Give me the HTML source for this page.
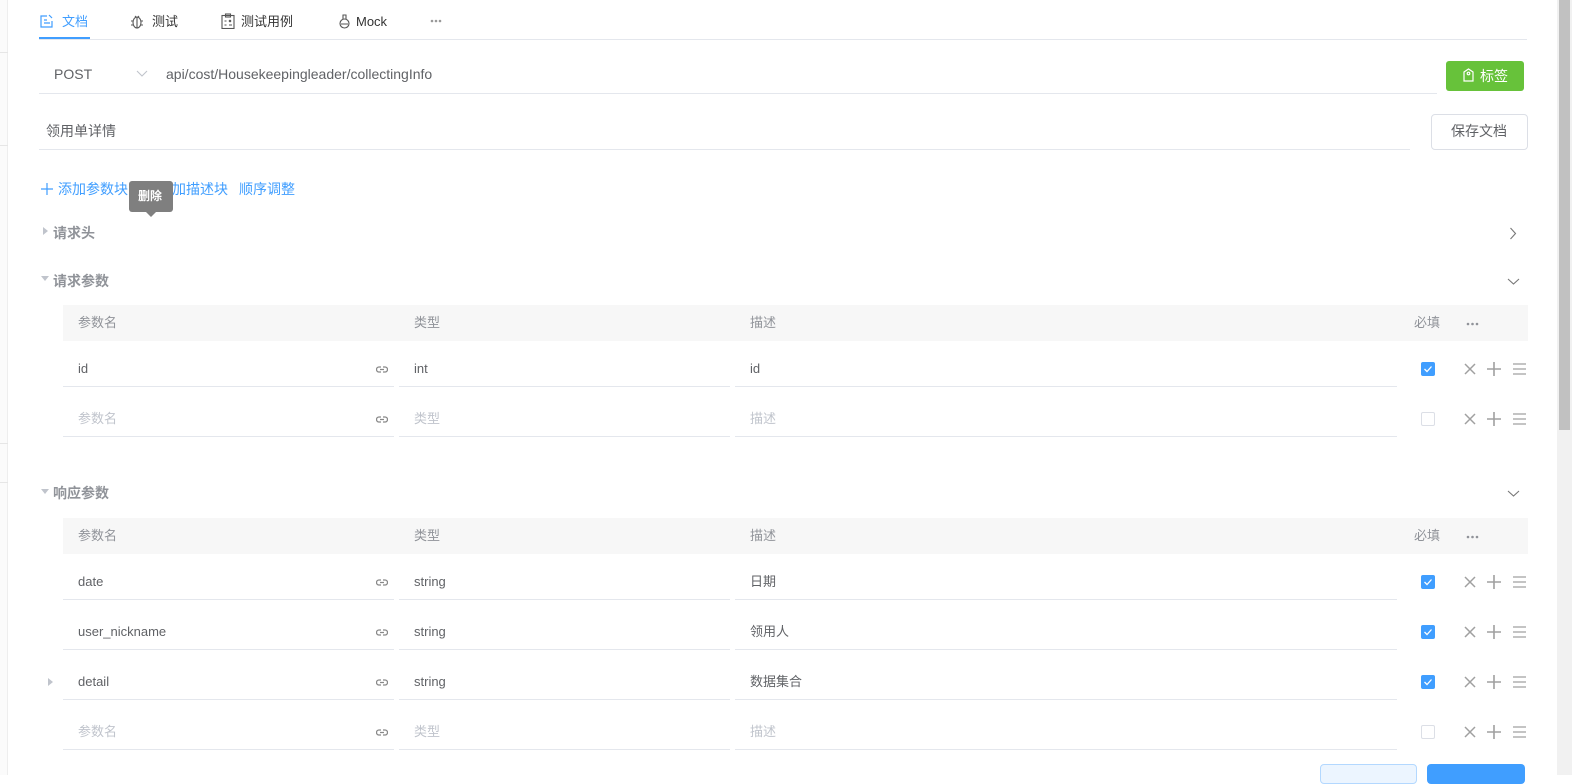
<!DOCTYPE html>
<html><head><meta charset="utf-8"><style>
*{box-sizing:border-box;margin:0;padding:0}
body{width:1572px;height:775px;overflow:hidden;background:#fff;position:relative;font-family:"Liberation Sans","Noto Sans CJK SC",sans-serif;font-size:13px;color:#606266}
.a{position:absolute}
.t{position:absolute;white-space:nowrap;line-height:16px}
.hl{position:absolute;height:1px;background:#e4e7ed}
.cb{position:absolute;width:14px;height:14px;border-radius:2px}
.on{background:#409eff}
.off{border:1px solid #dcdfe6;background:#fff}
</style></head><body>
<div class="a" style="left:0;top:0;width:8px;height:775px;background:#fbfbfb;border-right:1px solid #eee"></div>
<div class="a" style="left:0;top:52px;width:8px;height:1px;background:#e6e6e6"></div>
<div class="a" style="left:0;top:145px;width:8px;height:1px;background:#e6e6e6"></div>
<div class="a" style="left:0;top:443px;width:8px;height:1px;background:#e6e6e6"></div>
<div class="a" style="left:0;top:482px;width:8px;height:1px;background:#e6e6e6"></div>
<div class="a" style="left:1557px;top:0;width:15px;height:775px;background:#f1f1f1"></div>
<div class="a" style="left:1559px;top:0;width:11px;height:430px;background:#c1c1c1"></div>

<svg class="a" style="left:40px;top:14px" width="14" height="14" viewBox="0 0 14 14" fill="none" stroke="#409eff" stroke-width="1.2"><path d="M12 7v6H1V2h6"/><path d="M4 6h3M4 9h6"/><path d="M9 1l3 3"/></svg>
<div class="t" style="left:62px;top:14px;color:#409eff">文档</div>
<div class="a" style="left:39px;top:37px;width:51px;height:2px;background:#409eff"></div>
<svg class="a" style="left:130px;top:14px" width="14" height="15" viewBox="0 0 14 15" fill="none" stroke="#555" stroke-width="1.1"><ellipse cx="7" cy="8.5" rx="4" ry="5.5"/><path d="M7 3v11M3 7H1M11 7h2M3 11H1M11 11h2M5 2l1 1M9 2L8 3"/></svg>
<div class="t" style="left:152px;top:14px;color:#333">测试</div>
<svg class="a" style="left:221px;top:13px" width="14" height="16" viewBox="0 0 14 16" fill="none" stroke="#555" stroke-width="1.1"><rect x="1" y="2.5" width="12" height="13"/><rect x="4.5" y="1" width="5" height="3"/><path d="M3.5 8h2M8 7l2 2M10 7l-2 2M3.5 12h2M8 12h3"/></svg>
<div class="t" style="left:241px;top:14px;color:#333">测试用例</div>
<svg class="a" style="left:338px;top:13px" width="13" height="16" viewBox="0 0 13 16" fill="none" stroke="#555" stroke-width="1.1"><circle cx="6.5" cy="10.5" r="4.5"/><path d="M4.5 2h4M5 2v4M8 2v4M3 11h7"/></svg>
<div class="t" style="left:356px;top:14px;color:#333">Mock</div>
<svg class="a" style="left:430px;top:19px" width="12" height="4"><circle cx="2" cy="2" r="1.3" fill="#999"/><circle cx="6" cy="2" r="1.3" fill="#999"/><circle cx="10" cy="2" r="1.3" fill="#999"/></svg>
<div class="hl" style="left:39px;top:39px;width:1488px"></div>

<div class="t" style="left:54px;top:66px;color:#606266;font-size:14px">POST</div>
<svg class="a" style="left:136px;top:70px" width="12" height="8" viewBox="0 0 12 8" fill="none" stroke="#c0c4cc" stroke-width="1.1"><path d="M1 1l5 5 5-5"/></svg>
<div class="t" style="left:166px;top:66px;color:#606266;font-size:14px">api/cost/Housekeepingleader/collectingInfo</div>
<div class="hl" style="left:39px;top:93px;width:1398px"></div>
<div class="a" style="left:1446px;top:61px;width:78px;height:30px;background:#67c23a;border-radius:3px"></div>
<svg class="a" style="left:1463px;top:68px" width="11" height="14" viewBox="0 0 11 14" fill="none" stroke="#fff" stroke-width="1.2"><path d="M1 4l4.5-3L10 4v9H1z"/><circle cx="5.5" cy="5.5" r="1.3"/></svg>
<div class="t" style="left:1480px;top:68px;color:#fff;font-size:14px">标签</div>

<div class="t" style="left:46px;top:123px;color:#606266;font-size:14px">领用单详情</div>
<div class="hl" style="left:39px;top:149px;width:1371px"></div>
<div class="a" style="left:1431px;top:114px;width:97px;height:36px;border:1px solid #dcdfe6;border-radius:4px"></div>
<div class="t" style="left:1451px;top:123px;color:#606266;font-size:14px">保存文档</div>

<svg class="a" style="left:41px;top:183px" width="12" height="12" stroke="#409eff" stroke-width="1.2"><path d="M6 0v12M0 6h12"/></svg>
<div class="t" style="left:58px;top:181px;color:#409eff;font-size:14px">添加参数块</div>
<svg class="a" style="left:143px;top:183px" width="12" height="12" stroke="#409eff" stroke-width="1.2"><path d="M6 0v12M0 6h12"/></svg>
<div class="t" style="left:158px;top:181px;color:#409eff;font-size:14px">添加描述块</div>
<div class="t" style="left:239px;top:181px;color:#409eff;font-size:14px">顺序调整</div>
<div class="a" style="left:129px;top:181px;width:44px;height:31px;background:#7f7f7f;border-radius:3px"></div>
<div class="a" style="left:145px;top:211px;width:0;height:0;border-left:6px solid transparent;border-right:6px solid transparent;border-top:6px solid #7f7f7f"></div>
<div class="t" style="left:138px;top:188px;color:#fff;font-size:12px;font-weight:bold">删除</div>

<div class="a" style="left:43px;top:227px;border-top:4px solid transparent;border-bottom:4px solid transparent;border-left:5px solid #c0c4cc"></div>
<div class="t" style="left:53px;top:225px;color:#909399;font-size:14px;font-weight:bold">请求头</div>
<svg class="a" style="left:1509px;top:227px" width="8" height="13" viewBox="0 0 8 13" fill="none" stroke="#777" stroke-width="1.1"><path d="M1.5 1l5 5.5-5 5.5"/></svg>

<div class="a" style="left:41px;top:276px;border-left:4px solid transparent;border-right:4px solid transparent;border-top:5px solid #c0c4cc"></div>
<div class="t" style="left:53px;top:273px;color:#909399;font-size:14px;font-weight:bold">请求参数</div>
<svg class="a" style="left:1507px;top:278px" width="13" height="8" viewBox="0 0 13 8" fill="none" stroke="#777" stroke-width="1.1"><path d="M1 1l5.5 5 5.5-5"/></svg>

<div id="tables"></div>
<script>
function table(hy, rows){
 let h='';
 h+=`<div class="a" style="left:63px;top:${hy}px;width:1465px;height:36px;background:#f7f7f7"></div>`;
 const ty=hy+10;
 h+=`<div class="t" style="left:78px;top:${ty}px;color:#909399">参数名</div><div class="t" style="left:414px;top:${ty}px;color:#909399">类型</div><div class="t" style="left:750px;top:${ty}px;color:#909399">描述</div><div class="t" style="left:1414px;top:${ty}px;color:#909399">必填</div>`;
 h+=`<svg class="a" style="left:1466px;top:${hy+17}px" width="13" height="4"><circle cx="2" cy="2" r="1.3" fill="#909399"/><circle cx="6.5" cy="2" r="1.3" fill="#909399"/><circle cx="11" cy="2" r="1.3" fill="#909399"/></svg>`;
 rows.forEach((r,i)=>{
  const cy=hy+64+i*50;
  const py=cy-8, ly=cy+17;
  const ph=!r[0];
  const c=ph?'#c0c4cc':'#606266';
  h+=`<div class="t" style="left:78px;top:${py}px;color:${c}">${r[0]||'参数名'}</div>`;
  h+=`<div class="t" style="left:414px;top:${py}px;color:${c}">${r[1]||'类型'}</div>`;
  h+=`<div class="t" style="left:750px;top:${py}px;color:${c}">${r[2]||'描述'}</div>`;
  h+=`<svg class="a" style="left:376px;top:${cy-3}px" width="12" height="7" viewBox="0 0 12 7" fill="none" stroke="#888" stroke-width="1.3"><path d="M5 1H3a2.5 2.5 0 0 0 0 5h2M7 1h2a2.5 2.5 0 0 1 0 5H7M4 3.5h4"/></svg>`;
  h+=`<div class="hl" style="left:63px;top:${ly}px;width:331px"></div><div class="hl" style="left:399px;top:${ly}px;width:331px"></div><div class="hl" style="left:735px;top:${ly}px;width:662px"></div>`;
  if(r[3]) h+=`<div class="cb on" style="left:1421px;top:${cy-7}px"><svg width="14" height="14" viewBox="0 0 14 14" fill="none" stroke="#fff" stroke-width="1.3"><path d="M3.5 7l2.5 2.5 4.5-5"/></svg></div>`;
  else h+=`<div class="cb off" style="left:1421px;top:${cy-7}px"></div>`;
  h+=`<svg class="a" style="left:1464px;top:${cy-6}px" width="12" height="12" viewBox="0 0 12 12" stroke="#a0a0a0" stroke-width="1.5"><path d="M1 1l10 10M11 1L1 11"/></svg>`;
  h+=`<svg class="a" style="left:1487px;top:${cy-7}px" width="14" height="14" viewBox="0 0 14 14" stroke="#a0a0a0" stroke-width="1.6"><path d="M7 0v14M0 7h14"/></svg>`;
  h+=`<svg class="a" style="left:1513px;top:${cy-6}px" width="13" height="12" viewBox="0 0 13 12" stroke="#a0a0a0" stroke-width="1.3"><path d="M0 1h13M0 6h13M0 11h13"/></svg>`;
  if(r[4]) h+=`<div class="a" style="left:48px;top:${cy-4}px;border-top:4px solid transparent;border-bottom:4px solid transparent;border-left:5px solid #c0c4cc"></div>`;
 });
 return h;
}
document.getElementById('tables').outerHTML = table(305,[['id','int','id',1],['','','',0]]) + table(518,[['date','string','日期',1],['user_nickname','string','领用人',1],['detail','string','数据集合',1,1],['','','',0]]);
</script>

<div class="a" style="left:41px;top:489px;border-left:4px solid transparent;border-right:4px solid transparent;border-top:5px solid #c0c4cc"></div>
<div class="t" style="left:53px;top:485px;color:#909399;font-size:14px;font-weight:bold">响应参数</div>
<svg class="a" style="left:1507px;top:490px" width="13" height="8" viewBox="0 0 13 8" fill="none" stroke="#777" stroke-width="1.1"><path d="M1 1l5.5 5 5.5-5"/></svg>

<div class="a" style="left:1320px;top:764px;width:97px;height:20px;background:#ecf5ff;border:1px solid #b3d8ff;border-radius:4px"></div>
<div class="a" style="left:1427px;top:764px;width:98px;height:20px;background:#409eff;border-radius:4px"></div>
</body></html>
